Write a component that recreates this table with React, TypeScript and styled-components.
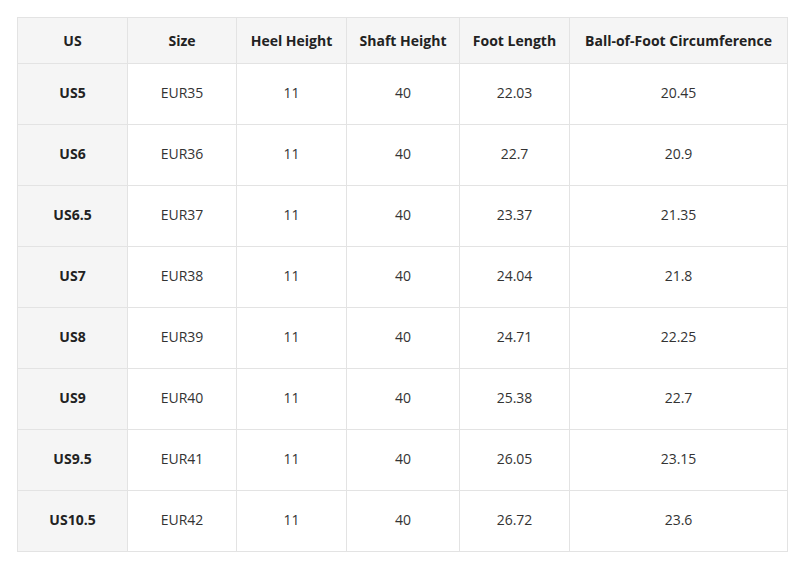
import React from "react";
import styled, { createGlobalStyle } from "styled-components";

const GlobalStyle = createGlobalStyle`
  html, body {
    margin: 0;
    padding: 0;
    background: #ffffff;
  }
  body {
    font-family: "Open Sans", "Noto Sans", "Liberation Sans", sans-serif;
    color: #333333;
  }
`;

const columns = [
  { label: "US", width: 110 },
  { label: "Size", width: 109 },
  { label: "Heel Height", width: 110 },
  { label: "Shaft Height", width: 113 },
  { label: "Foot Length", width: 110 },
  { label: "Ball-of-Foot Circumference", width: 218 },
];

const rows: string[][] = [
  ["US5", "EUR35", "11", "40", "22.03", "20.45"],
  ["US6", "EUR36", "11", "40", "22.7", "20.9"],
  ["US6.5", "EUR37", "11", "40", "23.37", "21.35"],
  ["US7", "EUR38", "11", "40", "24.04", "21.8"],
  ["US8", "EUR39", "11", "40", "24.71", "22.25"],
  ["US9", "EUR40", "11", "40", "25.38", "22.7"],
  ["US9.5", "EUR41", "11", "40", "26.05", "23.15"],
  ["US10.5", "EUR42", "11", "40", "26.72", "23.6"],
];

const App = () => {
  return (
    <>
      <GlobalStyle />
      <Page>
        <SizeTable>
          <colgroup>
            {columns.map((c) => (
              <col key={c.label} style={{ width: c.width }} />
            ))}
          </colgroup>
          <thead>
            <tr>
              {columns.map((c) => (
                <HeadCell key={c.label}>{c.label}</HeadCell>
              ))}
            </tr>
          </thead>
          <tbody>
            {rows.map((row) => (
              <tr key={row[0]}>
                {row.map((value, i) =>
                  i === 0 ? (
                    <RowHead key={i}>{value}</RowHead>
                  ) : (
                    <Cell key={i}>{value}</Cell>
                  )
                )}
              </tr>
            ))}
          </tbody>
        </SizeTable>
      </Page>
    </>
  );
};

export default App;

const Page = styled.div`
  padding: 17px 0 0 17px;
`;

const SizeTable = styled.table`
  width: 771px;
  table-layout: fixed;
  border-collapse: collapse;
  font-size: 14px;
  text-align: center;
`;

const HeadCell = styled.th`
  height: 44px;
  padding: 0 4px 1px;
  background: #f5f5f5;
  border: 1px solid #e3e3e3;
  font-weight: 700;
  color: #222222;
  white-space: nowrap;
`;

const RowHead = styled.th`
  height: 57px;
  padding: 0 4px 3px;
  background: #f5f5f5;
  border: 1px solid #e3e3e3;
  font-weight: 700;
  color: #222222;
`;

const Cell = styled.td`
  height: 57px;
  padding: 0 4px 3px;
  background: #ffffff;
  border: 1px solid #e3e3e3;
  color: #333333;
`;
